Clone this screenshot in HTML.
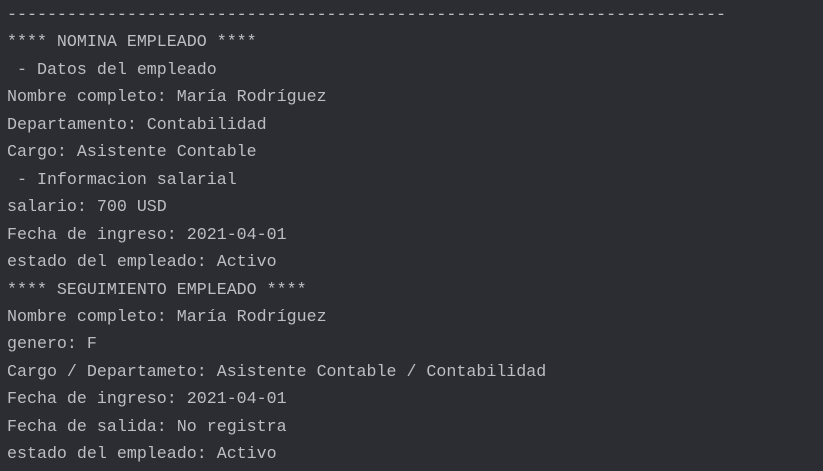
<!DOCTYPE html>
<html><head><meta charset="utf-8"><style>
html,body{margin:0;padding:0;background:#2b2d33;width:823px;height:471px;overflow:hidden}
pre{margin:0;padding:0 0 0 7px;font-family:"Liberation Mono","DejaVu Sans Mono",monospace;font-size:16.65px;line-height:27.45px;color:#bcbec4;position:relative;top:1px}
</style></head><body><pre>------------------------------------------------------------------------
**** NOMINA EMPLEADO ****
 - Datos del empleado
Nombre completo: María Rodríguez
Departamento: Contabilidad
Cargo: Asistente Contable
 - Informacion salarial
salario: 700 USD
Fecha de ingreso: 2021-04-01
estado del empleado: Activo
**** SEGUIMIENTO EMPLEADO ****
Nombre completo: María Rodríguez
genero: F
Cargo / Departameto: Asistente Contable / Contabilidad
Fecha de ingreso: 2021-04-01
Fecha de salida: No registra
estado del empleado: Activo</pre></body></html>
